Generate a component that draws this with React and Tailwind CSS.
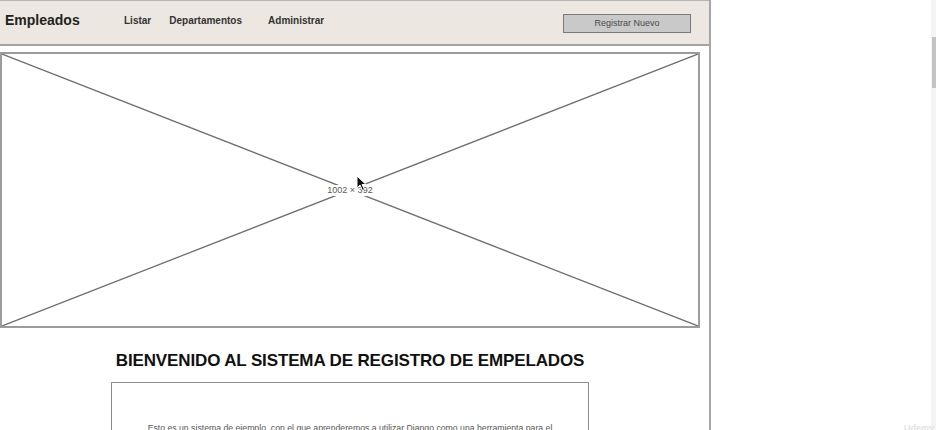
import React from "react";

function Placeholder() {
  return (
    <div className="relative w-[700px] h-[276px] border-2 border-[#9c9c9c] bg-white">
      <svg className="absolute inset-0 w-full h-full" viewBox="0 0 696 272" preserveAspectRatio="none">
        <line x1="0" y1="0" x2="696" y2="272" stroke="#6f6f6f" strokeWidth="1.3" />
        <line x1="696" y1="0" x2="0" y2="272" stroke="#6f6f6f" strokeWidth="1.3" />
      </svg>
      <div className="absolute inset-0 flex items-center justify-center">
        <span className="bg-white px-[1px] text-[9px] leading-[11px] text-[#5a5a5a] font-['Liberation_Sans',sans-serif]">
          1002 × 392
        </span>
      </div>
    </div>
  );
}

function Cursor() {
  return (
    <svg className="absolute left-[356px] top-[175px]" width="11" height="17" viewBox="0 0 11 17">
      <path d="M1 1 L1 13 L4 10 L6.5 15.5 L8.5 14.5 L6 9.5 L10 9.5 Z" fill="#111" stroke="#fff" strokeWidth="1" strokeLinejoin="round" />
    </svg>
  );
}

export default function App() {
  return (
    <div className="relative w-[936px] h-[430px] overflow-hidden bg-white flex font-['Liberation_Sans',sans-serif]">
      <div className="w-[711px] h-full shrink-0 border-r-2 border-[#a6a6a6] flex flex-col">
        <header className="h-[46px] shrink-0 bg-[#ece8e1] border-t border-b-2 border-t-[#b5b5b5] border-b-[#a3a3a3] flex items-center">
          <div className="pl-[5px] w-[124px] text-[14px] font-bold text-[#222] leading-none -mt-[6px]">Empleados</div>
          <nav className="flex items-center text-[10px] font-bold text-[#333] leading-none -mt-[4px]">
            <span>Listar</span>
            <span className="ml-[18px]">Departamentos</span>
            <span className="ml-[26px]">Administrar</span>
          </nav>
          <div className="flex-1" />
          <button className="mr-[18px] mt-[1px] w-[128px] h-[19px] bg-[#c9c9c9] border border-[#7a7a7a] text-[9px] text-[#4a4a4a] leading-none flex items-center justify-center">
            Registrar Nuevo
          </button>
        </header>
        <div className="w-[700px] flex flex-col items-center">
          <div className="mt-[6px]">
            <Placeholder />
          </div>
          <h1 className="mt-[23px] text-[17px] tracking-[-0.13px] leading-[20px] font-bold text-[#111] whitespace-nowrap">
            BIENVENIDO AL SISTEMA DE REGISTRO DE EMPELADOS
          </h1>
          <div className="mt-[11px] w-[478px] h-[80px] border border-[#8c8c8c] flex justify-center">
            <p className="mt-[40px] text-[8.7px] leading-[11px] text-[#555] whitespace-nowrap">
              Esto es un sistema de ejemplo, con el que aprenderemos a utilizar Django como una herramienta para el
            </p>
          </div>
        </div>
      </div>
      <div className="flex-1 h-full flex justify-end">
        <div className="w-[5px] h-full bg-[#f4f4f4] flex justify-end">
          <div className="w-[4px] h-[51px] mt-[37px] bg-[#c4c4c4]" />
        </div>
      </div>
      <Cursor />
      <div className="absolute right-[2px] bottom-[-3px] text-[9px] font-bold text-[#e2e2e2] leading-none">Udemy</div>
    </div>
  );
}
